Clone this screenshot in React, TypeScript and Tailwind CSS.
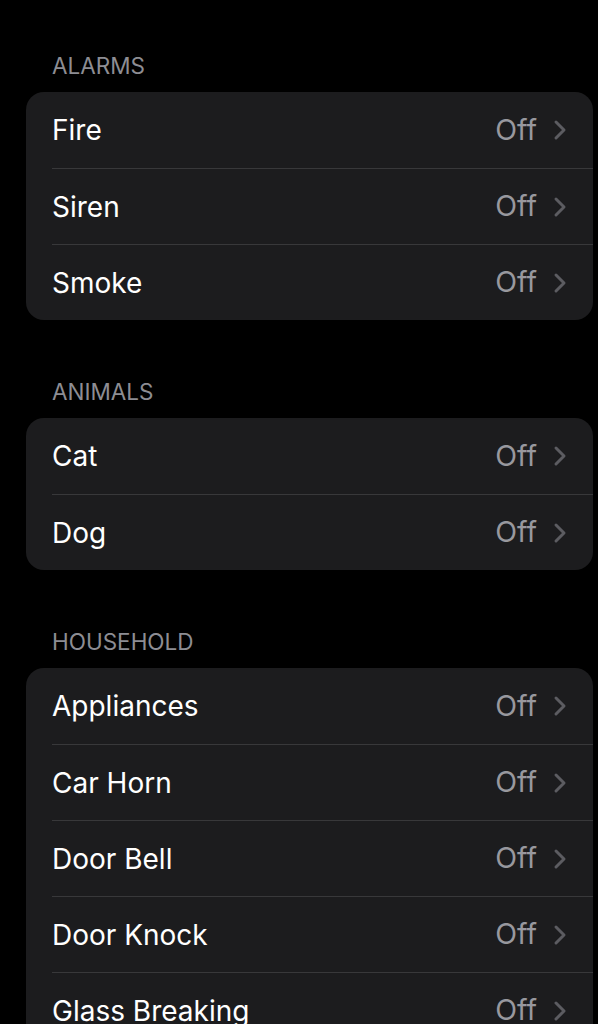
const sections: { title: string; items: string[] }[] = [
  { title: "ALARMS", items: ["Fire", "Siren", "Smoke"] },
  { title: "ANIMALS", items: ["Cat", "Dog"] },
  {
    title: "HOUSEHOLD",
    items: ["Appliances", "Car Horn", "Door Bell", "Door Knock", "Glass Breaking"],
  },
];

function Chevron() {
  return (
    <svg width="14" height="22" viewBox="0 0 14 22" fill="none" className="shrink-0">
      <path
        d="M3 3 L11 11 L3 19"
        stroke="#5c5c61"
        strokeWidth="3"
        strokeLinecap="round"
        strokeLinejoin="round"
      />
    </svg>
  );
}

export default function App() {
  return (
    <div
      className="min-h-screen bg-black pt-[52px] pl-[26px] pr-[5px] text-white"
      style={{ fontFamily: "Inter, 'Noto Sans', sans-serif" }}
    >
      {sections.map((section) => (
        <div key={section.title} className="mb-[58px]">
          <div className="h-[28px] pl-[26px] text-[22.5px] leading-[28px] text-[#8d8d93] mb-[12px]">
            {section.title}
          </div>
          <div className="overflow-hidden rounded-[18px] bg-[#1c1c1e]">
            {section.items.map((item, i) => (
              <div key={item} className="pl-[26px]">
                <div
                  className={
                    "flex h-[76px] items-center pr-[26px] " +
                    (i > 0 ? "border-t border-[#38383a]" : "")
                  }
                >
                  <span className="flex-1 text-[28px]">{item}</span>
                  <span className="mr-[16px] text-[28.5px] text-[#98989e]">Off</span>
                  <Chevron />
                </div>
              </div>
            ))}
          </div>
        </div>
      ))}
    </div>
  );
}
